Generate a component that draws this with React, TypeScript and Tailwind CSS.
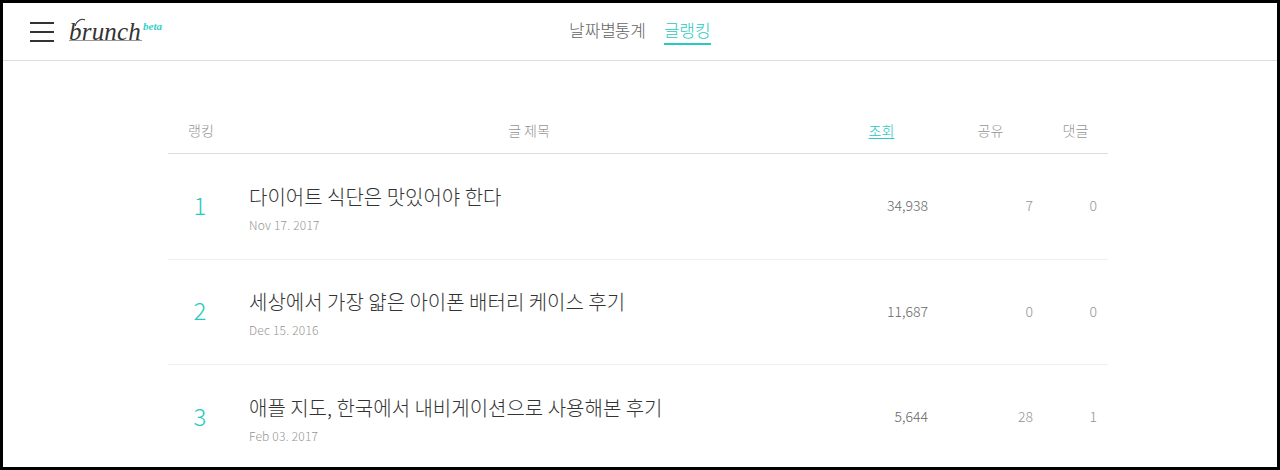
const rows = [
  { rank: 1, title: '다이어트 식단은 맛있어야 한다', date: 'Nov 17. 2017', views: '34,938', shares: '7', comments: '0' },
  { rank: 2, title: '세상에서 가장 얇은 아이폰 배터리 케이스 후기', date: 'Dec 15. 2016', views: '11,687', shares: '0', comments: '0' },
  { rank: 3, title: '애플 지도, 한국에서 내비게이션으로 사용해본 후기', date: 'Feb 03. 2017', views: '5,644', shares: '28', comments: '1' },
];

function Logo() {
  return (
    <div className="relative ml-[15px] h-[30px] w-[94px]">
      <span className="absolute left-0 top-0 font-['Liberation_Serif',serif] text-[25px] italic leading-[30px] tracking-[0.2px] text-[#333]">
        brunch
      </span>
      <svg className="absolute left-0 top-0" width="94" height="30" viewBox="0 0 94 30" fill="none">
        <path d="M6 9C8 3 13 1 16 3" stroke="#333" strokeWidth="1.1" />
        <path d="M0 23.5H73" stroke="#999" strokeWidth="1" />
      </svg>
      <span className="absolute left-[74px] top-[2px] font-['Liberation_Serif',serif] text-[11px] font-bold italic leading-[14px] text-[#2fd0c8]">
        beta
      </span>
    </div>
  );
}

export default function App() {
  return (
    <div className="h-[470px] overflow-hidden border-[3px] border-black bg-white font-['Noto_Sans_CJK_KR','Noto_Sans',sans-serif] font-light antialiased">
      <header className="relative flex h-[58px] items-center border-b border-[#ddd] pl-[27px] opacity-[0.999]">
        <div className="flex w-6 flex-col gap-[7px]">
          <span className="h-0.5 bg-[#333]" />
          <span className="h-0.5 bg-[#333]" />
          <span className="h-0.5 bg-[#333]" />
        </div>
        <Logo />
        <nav className="absolute left-[566px] top-0 flex h-full items-center gap-[18px] text-[17px] text-[#666]">
          <span className="border-b-2 border-transparent pb-[2px] leading-[22px] [word-spacing:-5px]">날짜별 통계</span>
          <span className="border-b-2 border-[#27c9c0] pb-[2px] leading-[22px] text-[#27c9c0] [word-spacing:-4px]">글 랭킹</span>
        </nav>
      </header>

      <main className="mx-auto mt-[46px] w-[940px] -translate-x-[2px] opacity-[0.999]">
        <div className="flex h-[47px] items-center border-b border-[#ddd] text-center text-[14px] text-[#959595]">
          <div className="w-[65px] pl-[1px]">랭킹</div>
          <div className="w-[592px]">글 제목</div>
          <div className="w-[112px] pl-[1px] text-[#27c9c0] underline underline-offset-2">조회</div>
          <div className="w-[106px] pl-[1px]">공유</div>
          <div className="w-[65px]">댓글</div>
        </div>
        {rows.map((row) => (
          <div key={row.rank} className="flex h-[105.5px] items-center border-b border-[#eee]">
            <div className="w-[65px] pb-[3px] pr-[1px] text-center text-[24px] text-[#27c9c0]">{row.rank}</div>
            <div className="w-[592px] pl-4 pt-[3px]">
              <div className="text-[20px] leading-[30px] text-[#333]">{row.title}</div>
              <div className="mt-[4px] text-[12px] leading-[18px] tracking-[0.2px] text-[#959595]">{row.date}</div>
            </div>
            <div className="w-[112px] pb-[1px] pr-[9px] text-right text-[14px] text-[#666]">{row.views}</div>
            <div className="w-[106px] pb-[1px] pr-[10px] text-right text-[14px] text-[#959595]">{row.shares}</div>
            <div className="w-[65px] pb-[1px] pr-[11px] text-right text-[14px] text-[#959595]">{row.comments}</div>
          </div>
        ))}
      </main>
    </div>
  );
}
